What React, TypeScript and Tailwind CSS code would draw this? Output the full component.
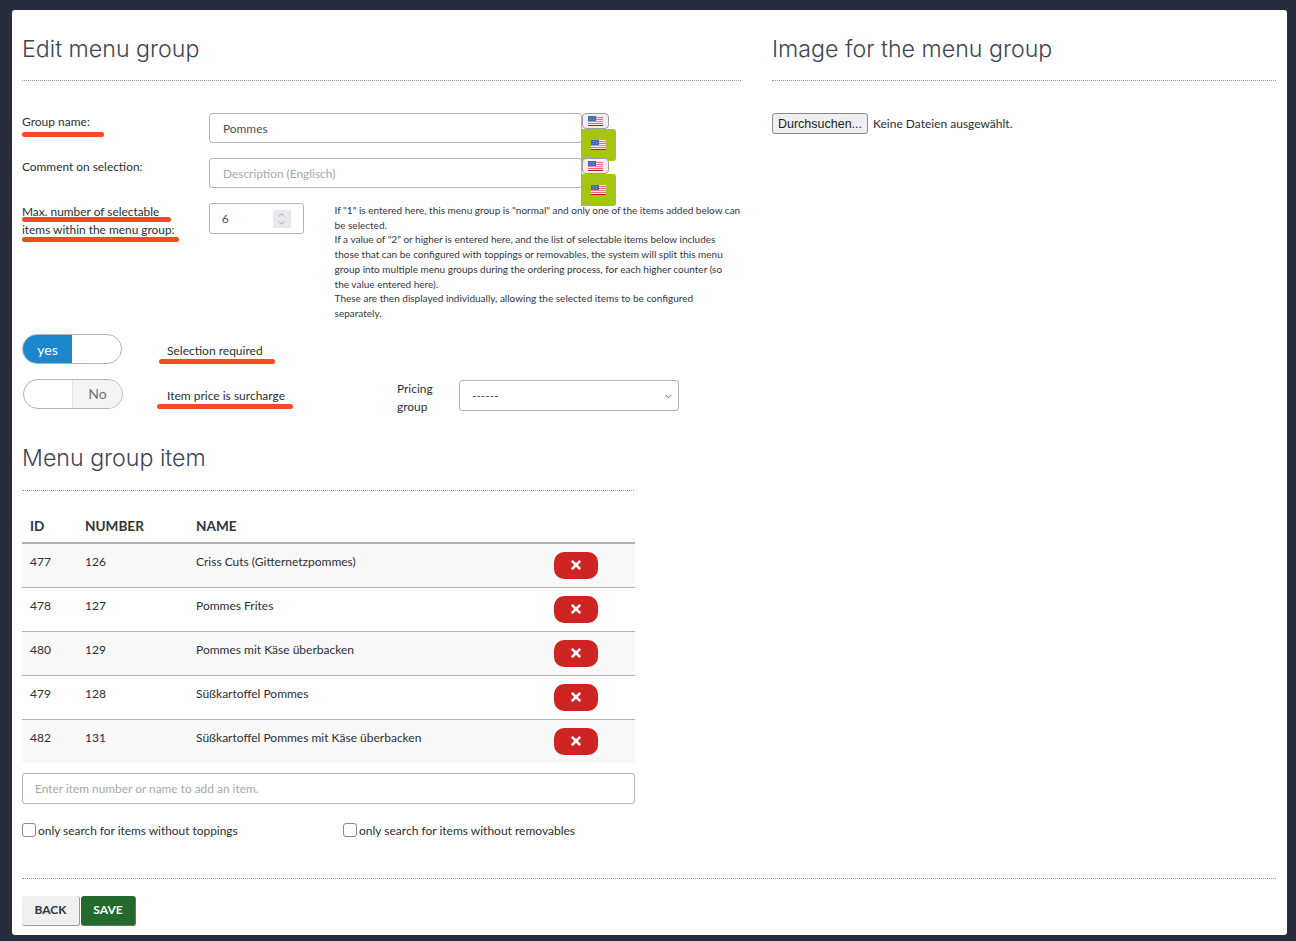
import React from 'react';
import { ChevronDown, ChevronUp } from 'lucide-react';
import { FaTimes } from 'react-icons/fa';

const items = [
  { id: 477, number: 126, name: 'Criss Cuts (Gitternetzpommes)' },
  { id: 478, number: 127, name: 'Pommes Frites' },
  { id: 480, number: 129, name: 'Pommes mit Käse überbacken' },
  { id: 479, number: 128, name: 'Süßkartoffel Pommes' },
  { id: 482, number: 131, name: 'Süßkartoffel Pommes mit Käse überbacken' },
];

const Flag = () => (
  <svg width="15" height="10" viewBox="0 0 15 10" className="block">
    <rect width="15" height="10" fill="#f6e4e8" />
    <rect y="1" width="15" height="1" fill="#e0707f" />
    <rect y="3" width="15" height="1" fill="#e0707f" />
    <rect y="5" width="15" height="1" fill="#e58a96" />
    <rect y="7" width="15" height="1" fill="#e0707f" />
    <rect y="9" width="15" height="1" fill="#c8102e" />
    <rect width="8" height="5" fill="#4468b8" />
    <rect x="2" y="1" width="1" height="1" fill="#7f98d6" />
    <rect x="5" y="1" width="1" height="1" fill="#7f98d6" />
    <rect x="2" y="3" width="1" height="1" fill="#7f98d6" />
    <rect x="5" y="3" width="1" height="1" fill="#7f98d6" />
  </svg>
);

const FlagButtons = () => (
  <div className="relative w-[35px] h-[30px] shrink-0">
    <div className="absolute left-0 top-0 w-[27px] h-[16px] flex items-center justify-center rounded-[4px] border border-[#9a9aa8] bg-[#efeff2]">
      <Flag />
    </div>
    <div className="absolute -left-[1px] top-[16px] w-[35px] h-[32px] flex items-center justify-center rounded-r-[3px] bg-[#a4c613]">
      <Flag />
    </div>
  </div>
);

const Mark = ({ className }: { className: string }) => (
  <span className={`absolute h-[5px] rounded-full bg-[#f74a23] ${className}`} />
);

export default function App() {
  return (
    <div className="h-[941px] overflow-hidden bg-[#262d3b] pt-[10px] pl-[12px] pr-[9px] font-['Lato','Liberation_Sans',sans-serif] text-[11.9px] text-[#2b2f38]">
      <div className="h-[925px] rounded-[3px] bg-white pl-[10px] pr-[11px]">
        <div className="flex gap-[31px]">
          <div className="w-[719px]">
            <h2 className="pt-[24px] h-[71px] border-b border-dotted border-[#9a9a9a] font-['Inter',sans-serif] font-light text-[23.2px] leading-[30px] text-[#3f4656]">Edit menu group</h2>

            <div className="flex mt-[32px] h-[45px]">
              <label className="relative w-[187px] pt-[1px] text-[12px] leading-[16px]">
                Group name:
                <Mark className="left-0 top-[19px] w-[82px]" />
              </label>
              <input readOnly value="Pommes" className="w-[373px] h-[30px] rounded-[3px] border border-[#b3b3b3] px-[13px] text-[#4a4f5a] outline-none" />
              <FlagButtons />
            </div>

            <div className="flex h-[45px]">
              <label className="w-[187px] pt-[1px] leading-[16px]">Comment on selection:</label>
              <input readOnly placeholder="Description (Englisch)" className="w-[373px] h-[30px] rounded-[3px] border border-[#b3b3b3] px-[13px] outline-none placeholder:text-[#a9a9a9]" />
              <FlagButtons />
            </div>

            <div className="flex h-[131px]">
              <label className="relative w-[187px] leading-[18px]">
                Max. number of selectable<br />items within the menu group:
                <Mark className="left-0 top-[14px] w-[149px]" />
                <Mark className="left-0 top-[34px] w-[157px]" />
              </label>
              <div className="relative w-[95px] h-[31px] rounded-[3px] border border-[#b3b3b3] pl-[12px] pt-[7px] text-[#4a4f5a] leading-[16px]">
                6
                <div className="absolute right-[12px] top-[6px] w-[18px] h-[18px] flex flex-col items-center justify-center bg-[#e9e9ed] text-[#808080]">
                  <ChevronUp size={11} strokeWidth={1.6} className="-mb-[1px]" />
                  <ChevronDown size={11} strokeWidth={1.6} className="-mt-[1px]" />
                </div>
              </div>
              <div className="ml-[31px] w-[407px] whitespace-nowrap text-[10px] leading-[14.7px] text-[#33373f]">
                If "1" is entered here, this menu group is "normal" and only one of the items added below can<br />
                be selected.<br />
                If a value of "2" or higher is entered here, and the list of selectable items below includes<br />
                those that can be configured with toppings or removables, the system will split this menu<br />
                group into multiple menu groups during the ordering process, for each higher counter (so<br />
                the value entered here).<br />
                These are then displayed individually, allowing the selected items to be configured<br />
                separately.
              </div>
            </div>

            <div className="flex h-[45px]">
              <div className="w-[100px] h-[30px] flex overflow-hidden rounded-full border border-[#b3b3b3]">
                <span className="w-[49px] flex items-center justify-center bg-[#1c87cd] text-white text-[14px]">yes</span>
              </div>
              <span className="relative ml-[45px] pt-[9px] text-[12px] leading-[16px]">
                Selection required
                <Mark className="-left-[8px] top-[25px] w-[116px]" />
              </span>
            </div>

            <div className="flex h-[65px]">
              <div className="ml-[1px] w-[100px] h-[30px] flex justify-end overflow-hidden rounded-full border border-[#b3b3b3]">
                <span className="w-[50px] pb-[1px] flex items-center justify-center border-l border-[#e6e6e6] bg-[#f3f3f3] text-[#6e7380] text-[14px]">No</span>
              </div>
              <span className="relative ml-[44px] w-[230px] pt-[9px] text-[12px] leading-[16px]">
                Item price is surcharge
                <Mark className="-left-[10px] top-[25px] w-[136px]" />
              </span>
              <label className="w-[62px] pt-[1px] leading-[18px]">Pricing<br />group</label>
              <div className="relative mt-[1px] w-[220px] h-[31px] rounded-[3px] border border-[#b3b3b3] pl-[12px] leading-[29px] text-[#4a4f5a]">
                ------
                <ChevronDown size={11} strokeWidth={2} className="absolute right-[4px] top-[10px] text-[#555]" />
              </div>
            </div>
          </div>

          <div className="w-[504px]">
            <h2 className="pt-[24px] h-[71px] border-b border-dotted border-[#9a9a9a] font-['Inter',sans-serif] font-light text-[23.2px] leading-[30px] text-[#3f4656]">Image for the menu group</h2>
            <div className="flex items-center mt-[32px] gap-[5px]">
              <button className="h-[21px] w-[96px] pt-[1px] rounded-[3px] border border-[#8a8a8a] bg-[#efefef] font-['Liberation_Sans',sans-serif] text-[12.5px] leading-none text-[#222]">Durchsuchen...</button>
              <span className="text-[12px]">Keine Dateien ausgewählt.</span>
            </div>
          </div>
        </div>

        <div className="w-[613px]">
          <h2 className="-mt-[1px] h-[48px] border-b border-dotted border-[#9a9a9a] mr-[1px] font-['Inter',sans-serif] font-light text-[23.2px] leading-[30px] text-[#3f4656]">Menu group item</h2>
          <table className="mt-[15px] w-full border-collapse text-left">
            <thead>
              <tr className="h-[37px] border-b-2 border-[#b3b3b3] text-[13.6px] font-bold text-[#2f3440]">
                <th className="w-[55px] pl-[8px] pt-[4px]">ID</th>
                <th className="w-[111px] pl-[8px] pt-[4px]">NUMBER</th>
                <th className="pl-[8px] pt-[4px]">NAME</th>
                <th className="w-[81px]"></th>
              </tr>
            </thead>
            <tbody className="text-[12px] leading-[16px]">
              {items.map((item, i) => (
                <tr key={item.id} className={`h-[44px] ${i < items.length - 1 ? 'border-b border-[#b3b3b3]' : ''} ${i % 2 === 0 ? 'bg-[#f9f9f9]' : 'bg-white'}`}>
                  <td className="pl-[8px] pb-[8px] pt-[1px]">{item.id}</td>
                  <td className="pl-[8px] pb-[8px] pt-[1px]">{item.number}</td>
                  <td className="pl-[8px] pb-[8px] pt-[1px]">{item.name}</td>
                  <td>
                    <button className="flex h-[27px] w-[44px] items-center justify-center rounded-[10px] bg-[#cf2424] text-white">
                      <FaTimes size={14} />
                    </button>
                  </td>
                </tr>
              ))}
            </tbody>
          </table>
          <input readOnly placeholder="Enter item number or name to add an item." className="mt-[10px] block w-full h-[31px] rounded-[3px] border border-[#b3b3b3] px-[12px] outline-none placeholder:text-[#a9a9a9]" />
          <div className="flex mt-[19px] h-[16px] items-center">
            <label className="flex w-[321px] items-center gap-[2px]">
              <span className="-mt-[2px] w-[14px] h-[14px] rounded-[3px] border border-[#8a8a8a] bg-white" />
              only search for items without toppings
            </label>
            <label className="flex items-center gap-[2px] text-[12px]">
              <span className="-mt-[2px] w-[14px] h-[14px] rounded-[3px] border border-[#8a8a8a] bg-white" />
              only search for items without removables
            </label>
          </div>
        </div>

        <div className="mt-[39px] flex h-[57px] items-start border-t border-dotted border-[#9a9a9a] pt-[17px]">
          <button className="h-[30px] w-[58px] pb-[1px] rounded-[3px] border-b border-r border-[#9a9a9a] bg-[#f0f0f0] text-[12px] font-bold text-[#2f3440]">BACK</button>
          <button className="ml-[1px] h-[30px] w-[55px] pb-[1px] rounded-[3px] border-b border-r border-[#5e7f5e] bg-[#236a2c] text-[12px] font-bold text-white">SAVE</button>
        </div>
      </div>
    </div>
  );
}
